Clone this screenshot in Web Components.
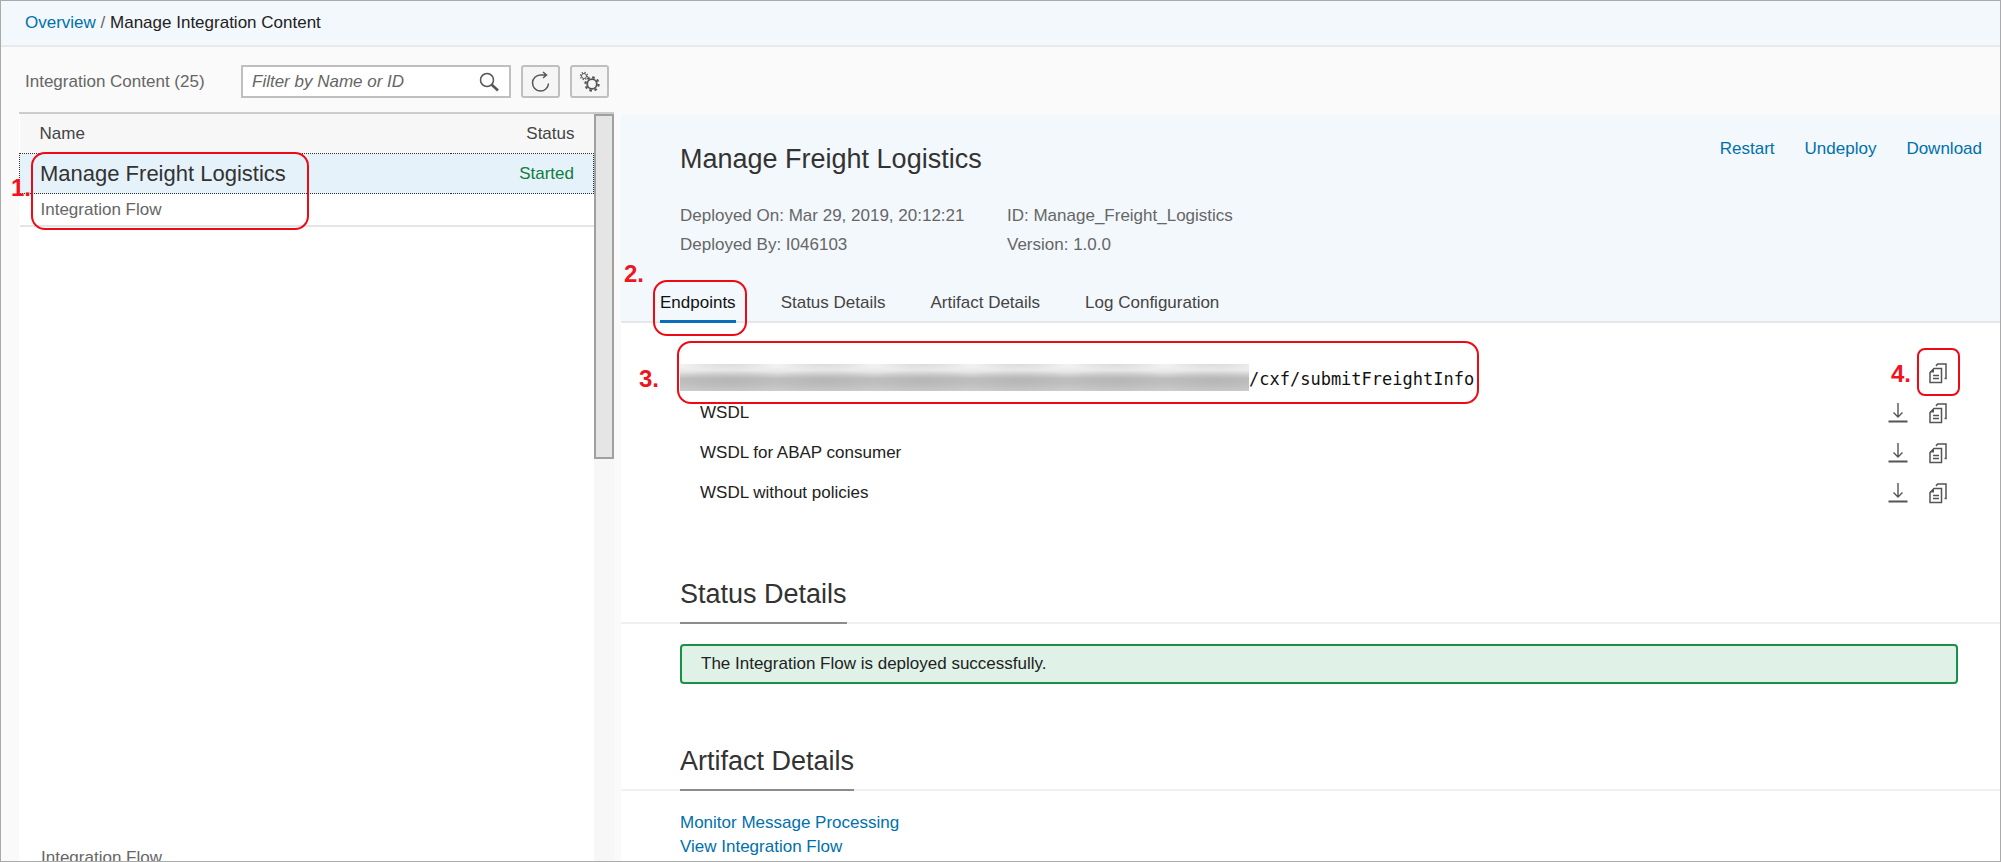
<!DOCTYPE html>
<html lang="en">
<head>
<meta charset="utf-8">
<title>Manage Integration Content</title>
<style>
  html, body { margin: 0; height: 100%; }
  body { font: 17px/24px "Liberation Sans", Arial, sans-serif; color: #333; overflow: hidden; }
</style>
</head>
<body>
<monitor-app></monitor-app>
<script>
const define = (name, html) => customElements.define(name, class extends HTMLElement {
  constructor() {
    super();
    const t = document.createElement('template');
    t.innerHTML = html;
    this.attachShadow({ mode: 'open' }).append(t.content.cloneNode(true));
  }
});

const icons = {
  search: '<circle cx="8" cy="8" r="6.5" stroke-width="1.5"/><path d="M12.500 12.500l6.500 6" stroke-width="2.500"/>',
  refresh: '<path d="M17.500 11.500a8 8 0 1 1-8-8.500h5.500M12 0l3.500 3-3.500 3" stroke-width="1.500"/>',
  settings: '<circle cx="12" cy="12" r="4.800" stroke-width="1.800"/><circle cx="12" cy="12" r="6.600" stroke-width="2.200" stroke-dasharray="2.600 2.580"/><circle cx="4" cy="4" r="2.500" stroke-width="1"/><circle cx="4" cy="4" r="3.600" stroke-width="1.200" stroke-dasharray="1.300 1.530"/>',
  download: '<path d="M10 0v14M5.500 9.500L10 14l4.500-4.500" stroke-width="1.400"/><path d="M0.500 18.500h19" stroke-width="2"/>',
  copy: '<path d="M2 9.500L6 5.500H13.500V19.500H2z" stroke-width="1.500"/><path d="M2 9.500H6V5.500z" fill="currentColor" stroke="none"/><path d="M8 3L9.500 1H18V15.500H16.500M5 12.500h6M5 15.500h6" stroke-width="1.500"/>'
};

customElements.define('ui-icon', class extends HTMLElement {
  connectedCallback() {
    if (this.shadowRoot) return;
    this.attachShadow({ mode: 'open' }).innerHTML =
      `<style>:host{display:block;width:20px;height:20px}svg{display:block;overflow:visible}</style>
       <svg width="20" height="20" viewBox="0 0 20 20" fill="none" stroke="currentColor" aria-hidden="true">${icons[this.getAttribute('name')]}</svg>`;
  }
});

/* Numbered red frame laid over the content it points at. */
define('call-out', `
<style>
  :host { position: absolute; box-sizing: border-box; border: 2px solid #ee0a14; border-radius: 14px; pointer-events: none; z-index: 2; }
  span { position: absolute; right: 100%; top: var(--y, 0px); margin-right: var(--gap, 0px); color: #f0141e; font: bold 24px/24px "Liberation Sans", Arial, sans-serif; }
</style><span><slot></slot></span>`);

define('crumb-bar', `
<style>
  :host { display: block; padding: 10px 24px; background: #f3f8fc; border-bottom: 2px solid #e7e9eb; color: #222; }
  a { color: #0070ad; text-decoration: none; }
  i { font-style: normal; color: #666; }
</style>
<nav aria-label="Breadcrumb"><a href="#overview">Overview</a> <i>/</i> Manage Integration Content</nav>`);

define('filter-bar', `
<style>
  :host { display: flex; align-items: center; gap: 10px; padding: 18px 0 14px 24px; color: #666; }
  label { flex: 0 0 206px; }
  .box { display: flex; align-items: center; box-sizing: border-box; width: 270px; height: 33px; padding: 0 10px 0 9px; background: #fff; border: 2px solid #bfbfbf; }
  input { flex: 1; min-width: 0; border: 0; padding: 0; outline: 0; background: none; font: inherit; color: #333; }
  input::placeholder { color: #666; font-style: italic; opacity: 1; }
  button { display: grid; place-items: center; box-sizing: border-box; width: 39px; height: 33px; padding: 0; background: #f5f5f5; border: 2px solid #bfbfbf; border-radius: 3px; color: #555; }
  .box ui-icon { color: #555; }
</style>
<label for="q">Integration Content (25)</label>
<div class="box"><input id="q" placeholder="Filter by Name or ID"><ui-icon name="search"></ui-icon></div>
<button aria-label="Refresh"><ui-icon name="refresh"></ui-icon></button>
<button aria-label="Settings"><ui-icon name="settings"></ui-icon></button>`);

define('content-list', `
<style>
  :host { display: flex; position: relative; width: 595px; flex: none; border-top: 2px solid #ccc; margin-left: 18px; box-sizing: border-box; }
  .list { flex: 1; display: flex; flex-direction: column; background: #fff; }
  table { width: 100%; border-collapse: collapse; }
  th { font-weight: normal; text-align: left; background: #f7f7f7; height: 39px; padding: 0 20px; color: #444; }
  th + th, td + td { text-align: right; padding-right: 19px; }
  td { padding: 0 20px; }
  .on td { background: #e5f2fa; height: 39px; border-top: 1px dotted #333; border-bottom: 1px dotted #333; color: #107e3e; }
  .on td:first-child { border-left: 1px dotted #333; font-size: 22px; color: #333; }
  .on td:last-child { border-right: 1px dotted #333; }
  .sub td { height: 31px; padding-left: 21px; color: #666; border-bottom: 2px solid #e5e5e5; }
  .next { margin-top: auto; padding: 0 22px; height: 15px; overflow: hidden; color: #666; }
  .track { width: 20px; background: #f7f7f7; }
  .thumb { box-sizing: border-box; height: 345px; background: #e5e5e5; border: 2px solid #a0a0a0; }
  call-out { left: 12px; top: 38px; width: 278px; height: 78px; --gap: 2px; --y: 22px; }
</style>
<div class="list">
  <table>
    <thead><tr><th>Name</th><th>Status</th></tr></thead>
    <tbody>
      <tr class="on"><td>Manage Freight Logistics</td><td>Started</td></tr>
      <tr class="sub"><td colspan="2">Integration Flow</td></tr>
    </tbody>
  </table>
  <div class="next">Integration Flow</div>
</div>
<div class="track"><div class="thumb"></div></div>
<call-out>1.</call-out>`);

define('artifact-header', `
<style>
  :host { display: block; background: #f3f8fc; border-bottom: 2px solid #e5e8ea; padding: 20px 18px 0 59px; }
  .top { display: flex; justify-content: space-between; align-items: flex-start; }
  h1 { margin: 9px 0 0; font: 27px/32px "Liberation Sans", Arial, sans-serif; }
  .actions { display: flex; gap: 30px; padding-top: 3px; }
  .actions a { color: #0070ad; text-decoration: none; }
  .facts { display: grid; grid-template-columns: 287px 1fr; gap: 5px 40px; margin: 29px 0 0; color: #666; }
  nav { display: flex; gap: 45px; margin: 34px 0 -2px -20px; }
  nav a { position: relative; color: #444; text-decoration: none; padding-bottom: 5px; border-bottom: 3px solid transparent; }
  nav a[aria-current] { color: #111; border-color: #0a6ebd; }
  call-out { left: -7px; top: -11px; width: 94px; height: 56px; --gap: 11px; --y: -20px; }
</style>
<div class="top">
  <h1>Manage Freight Logistics</h1>
  <div class="actions"><a href="#restart">Restart</a><a href="#undeploy">Undeploy</a><a href="#download">Download</a></div>
</div>
<div class="facts">
  <span>Deployed On: Mar 29, 2019, 20:12:21</span><span>ID: Manage_Freight_Logistics</span>
  <span>Deployed By: I046103</span><span>Version: 1.0.0</span>
</div>
<nav aria-label="Sections">
  <a href="#endpoints" aria-current="true">Endpoints<call-out>2.</call-out></a>
  <a href="#status">Status Details</a><a href="#artifact">Artifact Details</a><a href="#log">Log Configuration</a>
</nav>`);

define('endpoint-list', `
<style>
  :host { display: block; padding: 29px 52px 0 59px; color: #222; }
  .row { display: flex; align-items: center; height: 40px; padding-left: 20px; position: relative; }
  .row > span { flex: 1; }
  .url { padding-left: 0; height: 41px; }
  .url div { flex: 1; display: flex; align-items: center; padding-top: 13px; }
  .hidden { width: 569px; height: 27px; margin-bottom: 4px; background:
    radial-gradient(ellipse 60px 12px, #b2b2b2aa, #b2b2b200) 0 6px/97px 22px,
    linear-gradient(#f7f7f7, #e6e6e6 28%, #bebebe 55%, #c2c2c2 75%, #cbcbcb); }
  code { font: 17px/24px "DejaVu Sans Mono", monospace; color: #111; }
  button { display: grid; place-items: center; width: 20px; height: 22px; padding: 0; border: 0; background: none; color: #555; margin-left: 20px; }
  .url call-out { left: -3px; top: -11px; width: 802px; height: 63px; --gap: 20px; --y: 24px; }
  .url button { position: relative; }
  .url button call-out { left: -11px; top: -14px; width: 43px; height: 48px; border-radius: 8px; --gap: 8px; --y: 12px; }
</style>
<div class="row url"><div><span class="hidden"></span><code>/cxf/submitFreightInfo</code></div>
  <button aria-label="Copy endpoint"><ui-icon name="copy"></ui-icon><call-out>4.</call-out></button>
  <call-out>3.</call-out></div>
<div class="row"><span>WSDL</span><button aria-label="Download WSDL"><ui-icon name="download"></ui-icon></button><button aria-label="Copy WSDL"><ui-icon name="copy"></ui-icon></button></div>
<div class="row"><span>WSDL for ABAP consumer</span><button aria-label="Download ABAP WSDL"><ui-icon name="download"></ui-icon></button><button aria-label="Copy ABAP WSDL"><ui-icon name="copy"></ui-icon></button></div>
<div class="row"><span>WSDL without policies</span><button aria-label="Download WSDL without policies"><ui-icon name="download"></ui-icon></button><button aria-label="Copy WSDL without policies"><ui-icon name="copy"></ui-icon></button></div>`);

define('detail-section', `
<style>
  :host { display: block; }
  header { padding: 0 59px; border-bottom: 2px solid #f0f0f0; }
  h2 { display: inline-block; vertical-align: top; margin: 0 0 -2px; padding-bottom: 12px; border-bottom: 2px solid #8c8c8c; font: 27px/32px "Liberation Sans", Arial, sans-serif; color: #333; }
  .body { padding: 20px 42px 0 59px; }
</style>
<header><h2><slot name="title"></slot></h2></header><div class="body"><slot></slot></div>`);

define('success-strip', `
<style>
  :host { display: block; background: #e0f1e7; border: 2px solid #189048; border-radius: 4px; padding: 6px 19px; color: #222; }
</style><slot></slot>`);

define('monitor-app', `
<style>
  :host { display: flex; flex-direction: column; box-sizing: border-box; height: 100vh; border: 1px solid #aaa; background: #fafafa; overflow: hidden; }
  .main { flex: 1; min-height: 0; display: flex; gap: 7px; }
  .detail { flex: 1; min-width: 0; margin-top: 2px; background: #fff; overflow: hidden; }
  .status { margin-top: 65px; }
  .artifact { margin-top: 61px; }
  a { display: block; color: #0070ad; text-decoration: none; }
</style>
<crumb-bar></crumb-bar>
<filter-bar></filter-bar>
<div class="main">
  <content-list></content-list>
  <div class="detail">
    <artifact-header></artifact-header>
    <endpoint-list></endpoint-list>
    <detail-section class="status"><span slot="title">Status Details</span><success-strip>The Integration Flow is deployed successfully.</success-strip></detail-section>
    <detail-section class="artifact"><span slot="title">Artifact Details</span><a href="#monitor">Monitor Message Processing</a><a href="#flow">View Integration Flow</a></detail-section>
  </div>
</div>`);
</script>
</body>
</html>
